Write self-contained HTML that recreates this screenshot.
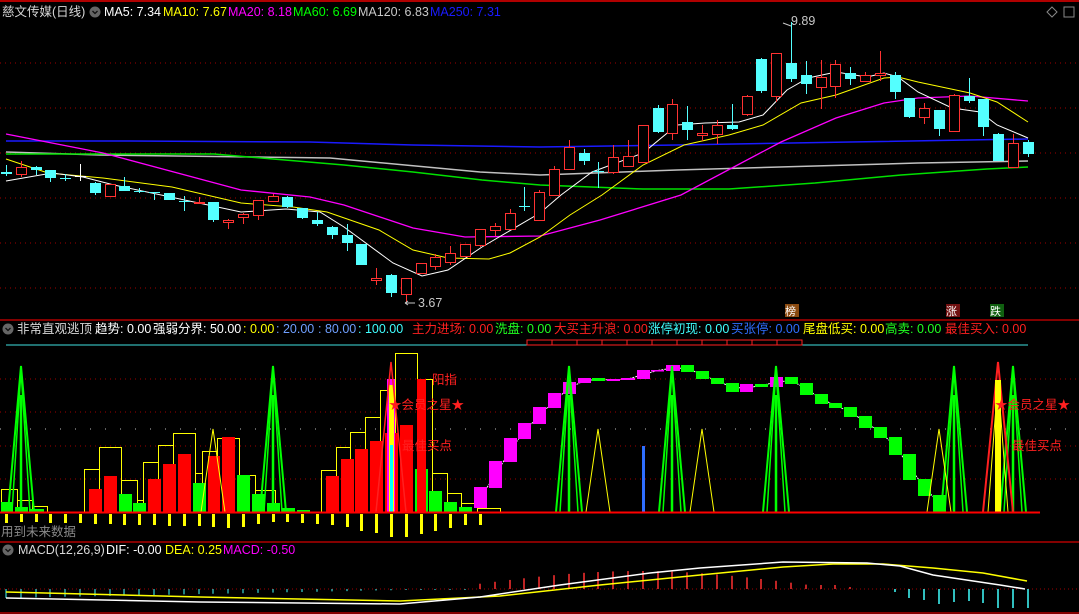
<!DOCTYPE html>
<html><head><meta charset="utf-8"><style>
html,body{margin:0;padding:0;background:#000;width:1079px;height:614px;overflow:hidden}
svg{display:block}
text{font-family:"Liberation Sans","Noto Sans CJK SC",sans-serif;font-size:12.5px}
rect{shape-rendering:crispEdges}
</style></head><body>
<svg id="s" width="1079" height="614" xmlns="http://www.w3.org/2000/svg">
<rect width="1079" height="614" fill="#000"/>
<line x1="0" y1="1" x2="1079" y2="1" stroke="#b00000" stroke-width="2"/>
<g id="grid"></g>
<g id="ma"></g>
<g id="cd"></g>
<text x="2" y="16" fill="#d8d8d8">慈文传媒(日线)</text>
<circle cx="95" cy="12" r="5.5" fill="#666"/><path d="M92.5 11 L95 13.5 L97.5 11" stroke="#111" fill="none" stroke-width="1.3"/>
<text x="104" y="16" fill="#fff">MA5: 7.34</text>
<text x="163" y="16" fill="#ffff00">MA10: 7.67</text>
<text x="228" y="16" fill="#ff00ff">MA20: 8.18</text>
<text x="293" y="16" fill="#00ff00">MA60: 6.69</text>
<text x="358" y="16" fill="#c8c8c8">MA120: 6.83</text>
<text x="430" y="16" fill="#1a1aff">MA250: 7.31</text>
<path d="M1052 7 l5 5 l-5 5 l-5 -5 z" stroke="#888" fill="none"/>
<rect x="1064" y="7" width="10" height="10" stroke="#888" fill="none"/>
<text x="791" y="25" fill="#c8c8c8">9.89</text>
<path d="M783 23 l8 3" stroke="#c8c8c8"/>
<text x="418" y="307" fill="#c8c8c8">3.67</text>
<path d="M405 303 l10 0 M405 303 l3 -2 M405 303 l3 2" stroke="#c8c8c8"/>
<rect x="785" y="304" width="14" height="13" fill="#8a4a10"/><text x="785" y="315" fill="#fff" style="font-size:11px">榜</text>
<rect x="946" y="304" width="14" height="13" fill="#701010"/><text x="946" y="315" fill="#fff" style="font-size:11px">涨</text>
<rect x="990" y="304" width="14" height="13" fill="#106010"/><text x="990" y="315" fill="#fff" style="font-size:11px">跌</text>
<line x1="0" y1="320" x2="1079" y2="320" stroke="#b00000" stroke-width="1.5"/>
<circle cx="8" cy="329" r="5.5" fill="#666"/><path d="M5.5 328 L8 330.5 L10.5 328" stroke="#111" fill="none" stroke-width="1.3"/>
<text x="17" y="333" fill="#d8d8d8">非常直观逃顶</text>
<text x="95" y="333" fill="#fff">趋势: 0.00</text>
<text x="153" y="333" fill="#fff">强弱分界: 50.00</text>
<text x="243" y="333" fill="#ffff00">: 0.00</text>
<text x="276" y="333" fill="#6f9fff">: 20.00</text>
<text x="318" y="333" fill="#6f9fff">: 80.00</text>
<text x="358" y="333" fill="#40ffff">: 100.00</text>
<text x="412" y="333" fill="#ff2020">主力进场: 0.00</text>
<text x="495" y="333" fill="#20ff20">洗盘: 0.00</text>
<text x="554" y="333" fill="#ff2020">大买主升浪: 0.00</text>
<text x="648" y="333" fill="#40ffff">涨停初现: 0.00</text>
<text x="731" y="333" fill="#2f6fff">买张停: 0.00</text>
<text x="803" y="333" fill="#ffff00">尾盘低买: 0.00</text>
<text x="885" y="333" fill="#20ff20">高卖: 0.00</text>
<text x="945" y="333" fill="#ff2020">最佳买入: 0.00</text>
<g id="ind"></g>
<text x="432" y="384" fill="#ff2020">阳指</text>
<text x="389" y="409" fill="#ff2020">★会员之星★</text>
<text x="402" y="450" fill="#ff2020">最佳买点</text>
<text x="995" y="409" fill="#ff2020">★会员之星★</text>
<text x="1012" y="450" fill="#ff2020">最佳买点</text>
<text x="1" y="536" fill="#8a8a8a">用到未来数据</text>
<line x1="0" y1="542" x2="1079" y2="542" stroke="#b00000" stroke-width="1.5"/>
<circle cx="8" cy="550" r="5.5" fill="#666"/><path d="M5.5 549 L8 551.5 L10.5 549" stroke="#111" fill="none" stroke-width="1.3"/>
<text x="18" y="554" fill="#d8d8d8">MACD(12,26,9)</text>
<text x="106" y="554" fill="#fff">DIF: -0.00</text>
<text x="165" y="554" fill="#ffff00">DEA: 0.25</text>
<text x="223" y="554" fill="#ff00ff">MACD: -0.50</text>
<g id="macd"></g>
<line x1="0" y1="613" x2="1079" y2="613" stroke="#b00000" stroke-width="1.5"/>
</svg>
<script>
var NS="http://www.w3.org/2000/svg";
function el(p,t,a){var e=document.createElementNS(NS,t);for(var k in a)e.setAttribute(k,a[k]);document.getElementById(p).appendChild(e);return e;}
function pl(p,pts,c,w,extra){var a={points:pts.map(function(q){return q.join(',')}).join(' '),fill:'none',stroke:c,'stroke-width':w||1};for(var k in extra)a[k]=extra[k];return el(p,'polyline',a);}
[63,108,153,198,243,288].forEach(function(y){el('grid','line',{x1:0,y1:y,x2:1079,y2:y,stroke:'#a00000','stroke-dasharray':'1 4'})});
pl('ma',[[6,141],[130,141],[310,142],[413,145],[540,147],[677,145],[850,142],[1028,139]],'#1a1aff',1.5);
pl('ma',[[6,152],[100,155],[330,158],[480,172],[540,175],[677,170],[815,166],[918,163],[1028,161]],'#c0c0c0',1.5);
pl('ma',[[6,154],[214,154],[344,165],[413,172],[482,180],[540,185],[643,189],[729,189],[815,183],[901,175],[987,169],[1028,167]],'#00e000',1.5);
pl('ma',[[6,134],[103,153],[241,190],[310,197],[344,205],[413,228],[465,237],[540,236],[600,220],[681,195],[781,142],[836,118],[884,103],[918,98],[970,96],[1028,101]],'#ff00ff',1.3);
pl('ma',[[6,159],[48,173],[103,178],[172,187],[241,203],[293,207],[327,212],[379,230],[413,250],[448,258],[489,259],[510,253],[540,237],[570,215],[602,195],[643,165],[684,145],[729,135],[763,125],[801,103],[836,95],[884,78],[898,77],[918,82],[970,93],[997,102],[1028,122]],'#ffff00',1);
pl('ma',[[6,181],[52,173],[83,177],[114,185],[241,212],[286,209],[320,212],[344,227],[393,263],[422,276],[448,270],[482,247],[540,213],[561,195],[592,172],[643,153],[677,125],[705,123],[739,122],[763,115],[787,90],[808,78],[836,72],[867,77],[884,73],[898,77],[918,92],[952,108],[980,112],[997,125],[1021,135],[1028,138]],'#fff',1);
var C=[['c',172,174,165,176],['r',167,174,161,177],['c',167,170,166,175],['c',170,178,170,182],['c',178,179,174,181],['w',176,177,164,181],['c',183,193,182,195],['r',184,196,184,196],['c',186,191,177,191],['c',191,192,188,193],['c',192,193,192,200],['c',193,200,193,200],['c',201,202,196,211],['r',202,203,197,204],['c',202,220,202,222],['r',220,222,219,229],['r',214,217,213,224],['r',200,215,200,220],['r',196,201,194,202],['c',197,207,196,208],['c',208,218,208,219],['c',220,224,212,226],['c',227,235,226,239],['c',235,243,224,251],['c',244,265,244,265],['r',278,280,268,285],['c',275,293,274,297],['r',278,294,278,302],['r',263,273,263,273],['r',257,266,254,270],['r',253,262,246,265],['r',244,256,244,256],['r',229,245,229,247],['r',226,230,223,236],['r',213,229,209,229],['c',206,207,187,211],['r',192,220,190,221],['r',169,195,166,196],['r',147,169,140,170],['c',153,161,149,165],['c',171,172,162,188],['r',157,172,145,174],['r',156,166,140,167],['r',125,162,125,162],['c',108,132,105,133],['r',104,133,99,140],['c',122,130,106,140],['r',133,135,125,141],['r',125,134,120,144],['c',125,129,104,130],['r',96,114,95,116],['c',59,91,58,93],['r',53,96,53,102],['c',63,79,22,82],['c',75,84,61,94],['r',77,87,60,109],['r',64,86,60,98],['c',73,79,67,85],['r',75,81,72,82],['r',73,75,51,81],['c',75,92,72,99],['c',98,117,98,118],['r',108,117,103,124],['c',110,129,110,136],['r',95,131,94,132],['c',96,101,78,103],['c',99,127,99,136],['c',134,161,133,161],['r',143,167,134,167],['c',142,154,140,157]];
C.forEach(function(c,i){var x=Math.round(6+i*14.81);var col=c[0]=='r'?'#ff3232':(c[0]=='w'?'#fff':'#54ffff');
el('cd','line',{x1:x+.5,y1:c[3],x2:x+.5,y2:c[4],stroke:col});
var h=Math.max(1,c[2]-c[1]);
if(c[0]=='r')el('cd','rect',{x:x-4.5,y:c[1]+.5,width:10,height:h,fill:'#000',stroke:col,'stroke-width':1.2});
else el('cd','rect',{x:x-5,y:c[1],width:11,height:h,fill:col});});
el('ind','line',{x1:6,y1:345,x2:1028,y2:345,stroke:'#40e0e0'});
for(var i=0;i<11;i++){el('ind','rect',{x:527+i*25,y:340,width:25,height:5,fill:'none',stroke:'#ff2020'});}
[379,412,446,479].forEach(function(y){el('ind','line',{x1:0,y1:y,x2:1079,y2:y,stroke:'#a00000','stroke-dasharray':'1 4'})});
el('ind','line',{x1:0,y1:429,x2:1079,y2:429,stroke:'#bbb','stroke-dasharray':'1 14'});
function yr(x1,x2,y){el('ind','rect',{x:x1+.5,y:y+.5,width:x2-x1,height:512-y,fill:'none',stroke:'#ffff00','stroke-width':1.2});}
[[1,17,489],[17,32,500],[32,47,506],[84,99,469],[99,121,447],[121,137,480],[137,143,500],[143,158,462],[158,173,445],[173,195,433],[195,202,473],[202,217,451],[217,239,438],[239,255,475],[255,275,490],[321,336,470],[336,350,447],[350,365,432],[365,380,417],[380,395,390],[395,417,353],[417,432,379],[432,447,473],[447,461,493],[461,477,503],[477,500,508]].forEach(function(r){yr(r[0],r[1],r[2])});
function fb(x1,x2,y,c){el('ind','rect',{x:x1,y:y,width:x2-x1,height:512-y,fill:c});}
var G='#00ff00',R='#ff0000',M='#ff00ff';
[[1,13,502,G],[15,28,507,G],[29,44,509,G],[89,102,489,R],[104,117,476,R],[119,132,494,G],[133,146,503,G],[148,161,479,R],[163,176,464,R],[178,191,454,R],[193,206,483,G],[208,220,456,R],[222,235,437,R],[237,250,475,G],[252,265,494,G],[267,280,503,G],[282,295,508,G],[297,310,510,G],[326,339,476,R],[341,354,459,R],[355,368,449,R],[370,383,441,R],[385,398,433,R],[400,413,425,R],[415,428,469,G],[417,426,379,R],[429,442,491,G],[444,457,502,G],[459,472,507,G]].forEach(function(b){fb(b[0],b[1],b[2],b[3])});
el('ind','rect',{x:387,y:379,width:8,height:133,fill:M});
el('ind','rect',{x:389,y:385,width:5,height:127,fill:'#ffff00'});
el('ind','rect',{x:390,y:445,width:3,height:67,fill:'#00ffff'});
var A=[[474,487,487,508,M],[489,502,461,488,M],[504,517,438,462,M],[518,531,423,439,M],[533,546,407,424,M],[548,561,393,408,M],[563,576,382,394,M],[578,591,378,383,M],[592,605,378,381,G],[607,620,379,381,M],[621,635,378,380,M],[637,650,370,379,M],[651,664,370,371,M],[666,680,365,371,M],[681,694,365,372,G],[696,709,371,379,G],[711,724,378,384,G],[726,739,383,392,G],[740,753,384,392,M],[755,768,384,387,G],[770,783,377,387,M],[785,798,377,384,G],[800,813,383,395,G],[815,828,394,404,G],[829,842,403,408,G],[844,857,407,417,G],[859,872,416,428,G],[874,887,427,438,G],[889,902,437,455,G],[903,916,454,480,G],[918,931,479,496,G],[933,946,495,512,G]];
pl('ind',A.map(function(a){return[(a[0]+a[1])/2,(a[2]+a[3])/2]}),'#fff',1,{'stroke-dasharray':'2 1'});
A.forEach(function(a){el('ind','rect',{x:a[0],y:a[2],width:a[1]-a[0],height:Math.max(1.5,a[3]-a[2]),fill:a[4]})});
[21,273,569,672,776,954,1013].forEach(function(x){
pl('ind',[[x-13,512],[x,366],[x+13,512]],'#00ff00',2);
pl('ind',[[x-9,512],[x,370],[x+9,512]],'#00ff00',1.5);
el('ind','line',{x1:x,y1:395,x2:x,y2:512,stroke:'#00ff00','stroke-width':2.5});});
[213,598,702,939].forEach(function(x){pl('ind',[[x-12,512],[x,429],[x+12,512]],'#ffff00',1)});
pl('ind',[[376,512],[391,362],[406,512]],'#ff2020',1.5);
pl('ind',[[983,512],[998,362],[1013,512]],'#ff2020',2);
pl('ind',[[988,512],[998,380],[1008,512]],'#ffff00',1);
el('ind','rect',{x:995,y:380,width:6,height:132,fill:'#ffff00'});
el('ind','rect',{x:642,y:446,width:3,height:66,fill:'#2f6fff'});
el('ind','line',{x1:0,y1:512.5,x2:1040,y2:512.5,stroke:'#ff0000','stroke-width':2});
var YB=[523,522,522,523,523,523,524,524,525,525,525,526,526,526,527,528,527,524,522,522,523,524,525,527,531,533,537,537,534,531,528,525,525];
YB.forEach(function(y,i){var x=Math.round(6+i*14.81);el('ind','rect',{x:x-1,y:514,width:3,height:y-514,fill:'#ffff00'})});
el('macd','line',{x1:0,y1:589,x2:1079,y2:589,stroke:'#a00000','stroke-dasharray':'1 3'});
for(var i=0;i<70;i++){var x=Math.round(6+i*14.81);var v;
 if(x<470){v=589+Math.max(1,9-i*0.3);el('macd','line',{x1:x,y1:589,x2:x,y2:v,stroke:'#40ffff'});}
 else if(x<860){var t=(x-470)/390;v=589-(4+14*Math.sin(Math.PI*Math.min(1,t*1.15)));if(x>840)v=587;el('macd','line',{x1:x,y1:589,x2:x,y2:v,stroke:'#ff3030','stroke-width':1.5});}
 else {var hh=[592,598,600,604,602,601,603,608,608,608][Math.min(9,Math.round((x-895)/14.8))];if(x<890)continue;el('macd','line',{x1:x,y1:589,x2:x,y2:hh,stroke:'#40ffff','stroke-width':1.5});}}
pl('macd',[[6,592],[200,597],[400,601],[500,596],[600,585],[700,575],[783,567],[833,564],[883,564],[933,568],[983,573],[1027,581]],'#ffff00',1.5);
pl('macd',[[6,598],[200,602],[400,604],[480,597],[560,585],[650,573],[700,568],[783,562],[867,563],[900,566],[933,575],[1000,585],[1025,589]],'#fff',1.5);
</script>
</body></html>
